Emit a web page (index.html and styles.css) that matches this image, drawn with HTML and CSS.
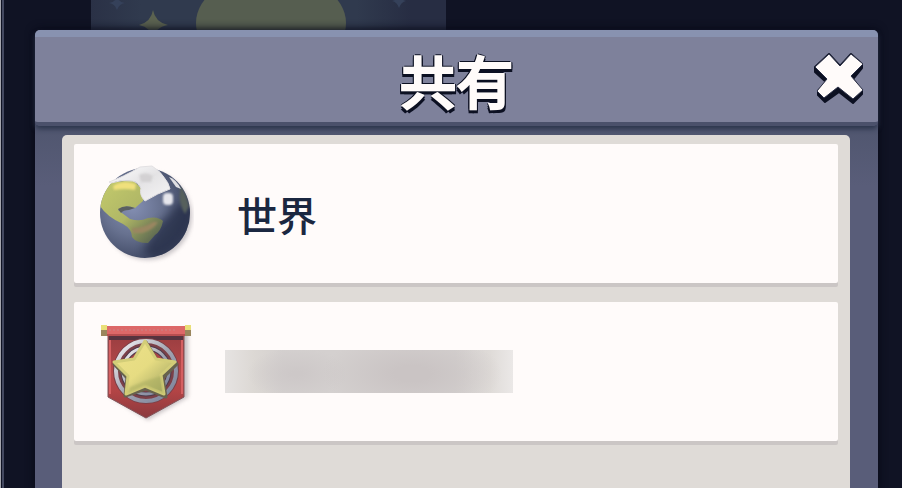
FILE: index.html
```html
<!DOCTYPE html>
<html lang="ja">
<head>
  <meta charset="UTF-8" />
  <meta name="viewport" content="width=device-width, initial-scale=1.0" />
  <title>共有</title>
  <link rel="stylesheet" href="styles.css">
</head>
<body>

  <div class="screen">
    <!-- Night sky picture behind the dialog -->
    <svg class="sky" viewBox="0 0 355 30" aria-hidden="true">
      <defs>
        <linearGradient id="night">
          <stop offset="0" stop-color="#2a3146" />
          <stop offset="0.14" stop-color="#303a4e" />
          <stop offset="0.75" stop-color="#303a4e" />
          <stop offset="0.9" stop-color="#272d43" />
        </linearGradient>
      </defs>
      <rect width="355" height="30" fill="url(#night)" />
      <ellipse cx="180" cy="23" rx="75" ry="50" fill="#565e50" />
      <path d="M62 10 Q64 22 77 25 Q66 27 62 36 Q58 27 48 25 Q60 22 62 10Z" fill="#5b6250" />
      <path d="M26-4 Q27 2 34 3 Q28 4 26 10 Q24 4 18 3 Q25 2 26-4Z" fill="#35415a" />
      <path d="M308-7 Q309 0 315 1 Q310 2 308 8 Q306 2 301 1 Q307 0 308-7Z" fill="#35415a" />
    </svg>

    <div class="dialog" role="dialog" aria-labelledby="dialogTitle">
      <header class="dialog-header">
        <h1 class="dialog-title" id="dialogTitle">共有</h1>
        <button class="close" type="button" aria-label="閉じる">
          <svg viewBox="0 0 52 54" aria-hidden="true">
            <path d="M15 2 L26 14 L37 2 L48 12 L48 16 L39 27 L48 39 L48 42 L39 51 L25 40 L11 50 L4 43 L4 39 L12 30 L1 20 L1 15Z" fill="#0c1022" stroke="#0c1022" stroke-width="2" stroke-linejoin="round" />
            <path d="M15 2 L26 14 L37 2 L49 12 L37 24 L49 38 L39 47 L24 35 L10 46 L3 39 L13 27 L1 15Z" fill="#fffbfa" stroke="#2b3047" stroke-width="1" stroke-linejoin="round" />
          </svg>
        </button>
      </header>

      <div class="dialog-body">
        <div class="list">
          <button class="card" type="button">
            <svg class="icon" viewBox="0 0 96 104" aria-hidden="true">
              <defs>
                <radialGradient id="sea" cx="36%" cy="42%" r="65%">
                  <stop offset="0" stop-color="#8590b4" />
                  <stop offset="0.5" stop-color="#67718f" />
                  <stop offset="1" stop-color="#3c4560" />
                </radialGradient>
                <linearGradient id="land" x1="0" y1="0" x2="1" y2="1">
                  <stop offset="0" stop-color="#c4cb6c" />
                  <stop offset="0.5" stop-color="#b0b766" />
                  <stop offset="1" stop-color="#48554b" />
                </linearGradient>
                <linearGradient id="ice" x1="0" y1="0" x2="1" y2="1">
                  <stop offset="0" stop-color="#ffffff" />
                  <stop offset="0.5" stop-color="#e4e3e5" />
                  <stop offset="1" stop-color="#f6f5f6" />
                </linearGradient>
                <clipPath id="globe"><circle cx="47" cy="51" r="45" /></clipPath>
              </defs>
              <circle class="soft" cx="50" cy="54" r="44" fill="#c9c4c7" />
              <circle cx="47" cy="51" r="45" fill="url(#sea)" />
              <g clip-path="url(#globe)">
                <path class="shade" d="M60 62 Q76 50 80 40 L96 48 Q92 82 58 97 L44 90Z" fill="#232b44" opacity="0.7" />
                <path d="M10 21 L35 18 L42 25 Q47 32 45 39 L37 46 Q28 42 20 48 L32 57 Q42 60 50 56 Q60 54 65 59 Q63 69 57 73 L50 81 Q38 81 34 75 Q34 67 25 62 Q9 55 2 44 L3 34Z" fill="url(#land)" />
                <path class="glow" d="M15 24 Q25 17 38 22 L37 28 Q27 26 16 28Z" fill="#f0e07c" />
                <path d="M20 47 Q27 42 37 46 L31 48 Q25 48 23 51Z" fill="#5a5f62" />
                <path class="glow" d="M34 66 Q46 66 55 60 L60 60 Q55 68 44 71 L35 71Z" fill="#9a8661" />
                <path class="glow" d="M82 23 Q88 31 91 44 L87 52 Q80 40 82 30Z" fill="#56605c" />
                <path d="M71 15 Q78 17 83 27 L78 25Z" fill="#dfdfe3" />
              </g>
              <path d="M11 20 Q25 15 42 5 L54 4 Q62 9 65 14 Q71 21 72 27 Q60 31 47 39 Q41 33 43 26 Q40 20 35 19 Q24 17 13 21Z" fill="url(#ice)" stroke="#e3e1e3" stroke-width="1" />
              <path class="glow" d="M41 13 Q48 9 55 14 L53 20 L43 20Z" fill="#d3d1d3" />
              <rect class="glow" x="65" y="31" width="10" height="12" rx="4" fill="#e6e6ec" />
            </svg>
            <span class="label">世界</span>
          </button>

          <button class="card" type="button" aria-label="クラン">
            <svg class="icon" viewBox="0 2 96 104" aria-hidden="true">
              <defs>
                <linearGradient id="gold" x1="0" y1="0" x2="1" y2="1">
                  <stop offset="0" stop-color="#eee18a" />
                  <stop offset="0.5" stop-color="#e6dc82" />
                  <stop offset="1" stop-color="#959b5c" />
                </linearGradient>
                <linearGradient id="ring" x1="0" y1="0" x2="1" y2="1">
                  <stop offset="0" stop-color="#f8f5f6" />
                  <stop offset="0.5" stop-color="#a3a5b3" />
                  <stop offset="1" stop-color="#777f98" />
                </linearGradient>
                <linearGradient id="cloth" x1="0" y1="0" x2="0" y2="1">
                  <stop offset="0" stop-color="#963c3f" />
                  <stop offset="0.5" stop-color="#b84a4b" />
                  <stop offset="0.7" stop-color="#b24445" />
                  <stop offset="1" stop-color="#8b393e" />
                </linearGradient>
              </defs>
              <path class="soft" d="M13 14 H90 V79 L50 102 L13 79Z" fill="#c5bfc2" />
              <path d="M10 12 H86 V79 L48 100 L10 79Z" fill="url(#cloth)" stroke="#81545a" stroke-width="1" />
              <path d="M84 18 V76 M12 18 V76" stroke="#d56062" stroke-width="2" />
              <rect x="11" y="18" width="74" height="4" fill="#57333f" />
              <rect x="8" y="8" width="79" height="10" fill="#dd6868" />
              <path d="M8 17 H87" stroke="#b84e50" stroke-width="2" />
              <path d="M11 12 H79" stroke="#c98386" stroke-width="1" stroke-dasharray="2 2" />
              <path d="M3 7 H9 V18 H3Z M87 7 H93 V18 H87Z" fill="#9a865d" />
              <path d="M3 7 H9 V12 H3Z M87 7 H93 V12 H87Z" fill="#e9df78" />
              <circle cx="48" cy="53" r="28" fill="none" stroke="#7b4048" stroke-width="10" />
              <circle cx="48" cy="53" r="30" fill="none" stroke="url(#ring)" stroke-width="4" />
              <circle cx="48" cy="53" r="23" fill="none" stroke="#4d3a4b" stroke-width="5" />
              <circle cx="48" cy="53" r="23" fill="none" stroke="url(#ring)" stroke-width="3" />
              <path d="M48 24 L59 42 L79 46 L65 60 L68 79 L48 71 L27 78 L29 60 L16 46 L37 42Z" fill="#67624d" stroke="#67624d" stroke-width="3" stroke-linejoin="round" />
              <path d="M47 23 L58 41 L77 44 L63 57 L66 76 L47 68 L28 76 L30 58 L16 44 L36 41Z" fill="url(#gold)" stroke="#d3cd78" stroke-width="3" stroke-linejoin="round" />
              <path class="glow" d="M63 58 L66 76 L47 68 L30 75 L32 69 L47 63Z" fill="#a5aa5e" opacity="0.5" />
            </svg>
            <span class="hidden-name"></span>
          </button>
        </div>
      </div>
    </div>
  </div>

</body>
</html>
```

FILE: styles.css
```css
* {
  box-sizing: border-box;
}

body {
  margin: 0;
  background: #101324;
  font-family: "Noto Sans CJK JP", sans-serif;
  color: #1b2740;
}

.screen {
  display: flex;
  flex-direction: column;
  height: 100vh;
  overflow: hidden;
  padding: 0 24px 0 35px;
  background: linear-gradient(to right, #a5a6ae 1px, #101324 1px, #101324 2px, #444960 2px, #444960 4px, #101324 4px);
}

.sky {
  flex: none;
  width: 355px;
  height: 30px;
  margin-left: 56px;
}

.dialog {
  flex: 1;
  display: flex;
  flex-direction: column;
  border-radius: 5px 5px 0 0;
  background: #585c78;
  box-shadow: 0 0 8px 1px #080a18;
}

.dialog-header {
  position: relative;
  z-index: 1;
  display: grid;
  grid-template-columns: 1fr auto 1fr;
  align-items: center;
  height: 96px;
  padding: 6px 12px 0;
  border-bottom: 4px solid #4b516b;
  border-radius: 5px;
  background: linear-gradient(#8892b0 7px, #7e819b 7px);
  box-shadow: 0 3px 5px #2c354c;
}

.dialog-title {
  grid-column: 2;
  margin: 0;
  font-size: 57px;
  line-height: 80px;
  font-weight: 500;
  color: #fffbfa;
  -webkit-text-stroke: 2px #fffbfa;
  text-shadow:
    -2px 0 #0c1022, 2px 0 #0c1022, 0 -2px #0c1022,
    -2px -1px #0c1022, 2px -1px #0c1022,
    -2px 2px #0c1022, 2px 2px #0c1022,
    -2px 4px #0c1022, 2px 4px #0c1022;
}

button {
  border: none;
  font: inherit;
  color: inherit;
  cursor: pointer;
}

.close {
  justify-self: end;
  width: 52px;
  height: 54px;
  padding: 0;
  background: none;
}

.close svg {
  display: block;
}

.dialog-body {
  flex: 1;
  display: flex;
  padding: 9px 28px 0 27px;
  background: linear-gradient(#50566f, #595d79 60px);
}

.list {
  flex: 1;
  display: flex;
  flex-direction: column;
  gap: 19px;
  padding: 9px 12px;
  border-radius: 5px 5px 0 0;
  background: #dfdbd7;
}

.card {
  display: flex;
  align-items: center;
  height: 139px;
  padding: 0 24px;
  border-radius: 2px;
  background: #fffbfa;
  box-shadow: 0 4px #cbc6c5;
  text-align: left;
}

.icon {
  flex: none;
  width: 96px;
  height: 104px;
}

.soft {
  filter: blur(2px);
}

.glow {
  filter: blur(1px);
}

.shade {
  filter: blur(4px);
}

.label {
  margin-left: 43px;
  font-size: 40px;
  line-height: 56px;
  font-weight: 500;
}

.hidden-name {
  width: 288px;
  height: 43px;
  margin-left: 31px;
  background:
    radial-gradient(90px 40px at 65% 55%, #cac4c4 20%, rgba(202, 196, 196, 0)),
    radial-gradient(50px 26px at 25% 55%, #cdc8c8 10%, rgba(205, 200, 200, 0)),
    linear-gradient(to right, #e6e3e2, #dcd8d4 10%, #d4d0cf 20%, #d4d0cf 80%, #dfdbd8 92%, #ebe8e7);
}
```
